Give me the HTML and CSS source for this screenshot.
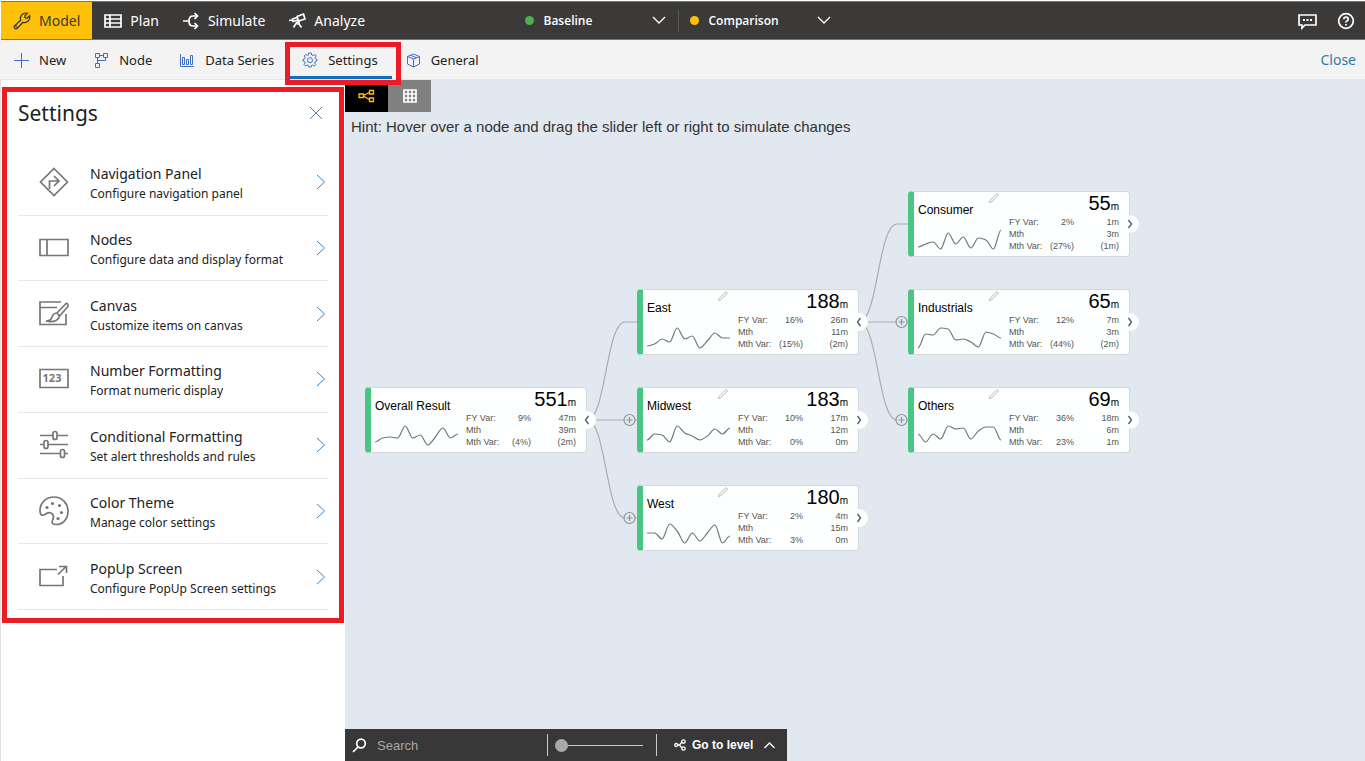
FILE: index.html
```html
<!DOCTYPE html>
<html lang="en">
<head>
<meta charset="utf-8">
<title>Model settings</title>
<meta name="viewport" content="width=device-width, initial-scale=1">
<link rel="stylesheet" href="styles.css">
</head>
<body>
<div class="app">
  <header class="topbar">
    <nav class="modes">
      <button class="mode mode-active" type="button">
        <svg class="icon" width="18" height="18" viewBox="0 0 18 18"><path d="M7.600 8.200C6.300 4 10 .300 14.300 1.400L11.700 4L12.200 5.800L14 6.300L16.600 3.700C17.700 8 14 11.500 9.900 10.300L4.300 16.200A1.700 1.700 0 0 1 1.700 13.700Z"/><circle cx="3.400" cy="14.500" r=".3"/></svg>
        Model
      </button>
      <button class="mode" type="button">
        <svg class="icon bold" width="18" height="18" viewBox="0 0 18 18"><path d="M1 3H17V15H1ZM1 7H17M1 11H17M6 3V15"/></svg>
        Plan
      </button>
      <button class="mode" type="button">
        <svg class="icon bold" width="17" height="18" viewBox="0 0 17 18"><path d="M0 9H6M14 4H10Q6 4 6 9Q6 14 10 14H14M11.500 1L14.500 4L11.500 7M11.500 11L14.500 14L11.500 17"/></svg>
        Simulate
      </button>
      <button class="mode" type="button">
        <svg class="icon bold" width="17" height="18" viewBox="0 0 17 18"><path d="M8 4.500L14.500 2L16 7L9.500 9ZM8 5.500L3.500 7L4 9.500L9 8M3.500 8L0 8.500M8 10L4.500 15.500M8 10H10V12H8M10 12L12.500 15.500"/></svg>
        Analyze
      </button>
    </nav>
    <div class="scenarios">
      <label class="scenario">
        <span class="dot dot-green"></span>
        <select class="scenario-select" aria-label="Baseline scenario"><option>Baseline</option></select>
        <svg class="icon" width="14" height="10" viewBox="0 0 14 10"><path d="M1 1L7 7L13 1"/></svg>
      </label>
      <label class="scenario">
        <span class="dot dot-amber"></span>
        <select class="scenario-select" aria-label="Comparison scenario"><option>Comparison</option></select>
        <svg class="icon" width="14" height="10" viewBox="0 0 14 10"><path d="M1 1L7 7L13 1"/></svg>
      </label>
    </div>
    <div class="utilities">
      <button class="utility" type="button" aria-label="Comments">
        <svg class="icon bold" width="19" height="18" viewBox="0 0 19 18"><path d="M1 3H18V13H7L4 16V13H1Z"/><path class="dots" d="M5 8H7M8.500 8H10.500M12 8H14"/></svg>
      </button>
      <button class="utility" type="button" aria-label="Help">
        <svg class="icon bold" width="18" height="18" viewBox="0 0 18 18"><circle cx="9" cy="9" r="7.300"/><path d="M6.800 7.300Q6.800 5.200 9 5.200T11.200 7.200Q11.200 8.300 10 8.900T9 10.600M9 12V13.500"/></svg>
      </button>
    </div>
  </header>

  <div class="toolbar">
    <button class="tool" type="button">
      <svg class="icon tool-icon" width="15" height="15" viewBox="0 0 15 15"><path d="M0 7.500H15M7.500 0V15"/></svg>
      New
    </button>
    <button class="tool" type="button">
      <svg class="icon tool-icon" width="15" height="15" viewBox="0 0 15 15"><path d="M1.500 .500H5.500V4.500H1.500ZM9.500 .500H13.500V4.500H9.500ZM1.500 10.500H5.500V14.500H1.500ZM3.500 4.500V10.500M5.500 2.500H9.500M11.500 4.500V7.500H3.500"/></svg>
      Node
    </button>
    <button class="tool" type="button">
      <svg class="icon tool-icon" width="15" height="15" viewBox="0 0 15 15"><path d="M.500 1V13.500H14M2.500 4.500H4.500V11.500H2.500ZM6.500 6.500H8.500V11.500H6.500ZM10.500 2.500H12.500V11.500H10.500Z"/></svg>
      Data Series
    </button>
    <button class="tool tool-active" type="button">
      <svg class="icon tool-icon" width="16" height="16" viewBox="0 0 16 16"><path d="M6.700 1H9.300L9.700 3L11.200 3.600L12.900 2.400L14.200 4.100L13 5.800L13.400 7L15 7.500V9L13.200 9.500L12.700 11L13.800 12.600L12.200 14L10.600 13L9.500 13.400L9.200 15H6.800L6.400 13.400L5.200 13L3.600 14L2.100 12.500L3.200 11L2.700 9.500L1 9V7.300L2.700 6.800L3.200 5.500L2.200 3.900L3.700 2.400L5.200 3.500L6.300 3Z"/><circle cx="8" cy="8.200" r="2.500"/></svg>
      Settings
    </button>
    <button class="tool" type="button">
      <svg class="icon tool-icon" width="15" height="15" viewBox="0 0 15 15"><path d="M7.500 1L13.500 3.500V11L7.500 14L1.500 11V3.500ZM1.500 3.500L7.500 6L13.500 3.500M7.500 6V14M4.500 2.300L10.500 4.800"/></svg>
      General
    </button>
    <a class="close-link" href="#">Close</a>
    <span class="callout callout-tab"></span>
  </div>

  <div class="workspace">
    <aside class="panel">
      <div class="panel-head">
        <h1 class="panel-title">Settings</h1>
        <button class="panel-close" type="button" aria-label="Close settings">
          <svg class="icon" width="14" height="14" viewBox="0 0 14 14"><path d="M1 1L13 13M13 1L1 13"/></svg>
        </button>
      </div>
      <div class="options">
        <button class="option" type="button">
          <svg class="icon option-icon" width="30" height="30" viewBox="0 0 30 30"><path d="M15 1.500L28.500 15L15 28.500L1.500 15ZM10.500 22V14H19M15 9L20 14L15 19"/></svg>
          <span class="option-text"><span class="option-title">Navigation Panel</span><span class="option-note">Configure navigation panel</span></span>
          <svg class="icon option-arrow" width="10" height="16" viewBox="0 0 10 16"><path d="M1 1L8.500 8L1 15"/></svg>
        </button>
        <button class="option" type="button">
          <svg class="icon option-icon" width="30" height="30" viewBox="0 0 30 30"><path d="M1 6.500H29V22.500H1ZM8 6.500V22.500"/></svg>
          <span class="option-text"><span class="option-title">Nodes</span><span class="option-note">Configure data and display format</span></span>
          <svg class="icon option-arrow" width="10" height="16" viewBox="0 0 10 16"><path d="M1 1L8.500 8L1 15"/></svg>
        </button>
        <button class="option" type="button">
          <svg class="icon option-icon" width="30" height="30" viewBox="0 0 30 30"><path d="M22 3H1V25.500H27V15M1 8.500H18M27 4.500L18 14L20.500 17L29 7.500Q29 4 27 4.500ZM18 14Q14 14.500 13 18Q12 22 7 22Q13 23.500 17 21.500Q20 20 20.500 17"/></svg>
          <span class="option-text"><span class="option-title">Canvas</span><span class="option-note">Customize items on canvas</span></span>
          <svg class="icon option-arrow" width="10" height="16" viewBox="0 0 10 16"><path d="M1 1L8.500 8L1 15"/></svg>
        </button>
        <button class="option" type="button">
          <svg class="icon option-icon" width="30" height="30" viewBox="0 0 30 30"><path d="M1 5.500H29V23.500H1Z"/><text class="digits" x="13" y="18">123</text></svg>
          <span class="option-text"><span class="option-title">Number Formatting</span><span class="option-note">Format numeric display</span></span>
          <svg class="icon option-arrow" width="10" height="16" viewBox="0 0 10 16"><path d="M1 1L8.500 8L1 15"/></svg>
        </button>
        <button class="option" type="button">
          <svg class="icon option-icon" width="30" height="30" viewBox="0 0 30 30"><path d="M1 5.500H13.500M18.500 5.500H29M1 14.500H4.500M9.500 14.500H29M1 23.500H21M26 23.500H29"/><rect x="14" y="1.500" width="4" height="8" rx="2"/><rect x="5" y="10.500" width="4" height="8" rx="2"/><rect x="21.500" y="19.500" width="4" height="8" rx="2"/></svg>
          <span class="option-text"><span class="option-title">Conditional Formatting</span><span class="option-note">Set alert thresholds and rules</span></span>
          <svg class="icon option-arrow" width="10" height="16" viewBox="0 0 10 16"><path d="M1 1L8.500 8L1 15"/></svg>
        </button>
        <button class="option" type="button">
          <svg class="icon option-icon" width="30" height="30" viewBox="0 0 30 30"><path d="M1 14.500C1 7 7 1 15 1S29 7 29 15.500C29 23 24 28.500 17 28.500Q12 28.500 13.500 24.500Q16 19 12 17Q9 16 6 18.500Q1 21 1 14.500Z"/><g class="dabs"><circle cx="8" cy="11.500" r="1.600"/><circle cx="13.500" cy="7.500" r="1.600"/><circle cx="20.500" cy="9.500" r="1.600"/><circle cx="22.500" cy="16.500" r="1.600"/><circle cx="19" cy="22.500" r="1.600"/></g></svg>
          <span class="option-text"><span class="option-title">Color Theme</span><span class="option-note">Manage color settings</span></span>
          <svg class="icon option-arrow" width="10" height="16" viewBox="0 0 10 16"><path d="M1 1L8.500 8L1 15"/></svg>
        </button>
        <button class="option" type="button">
          <svg class="icon option-icon" width="30" height="30" viewBox="0 0 30 30"><path d="M18 7.500H1V23.500H24V14M19 12.500L27 4.500M20 4.500H27.500V11"/></svg>
          <span class="option-text"><span class="option-title">PopUp Screen</span><span class="option-note">Configure PopUp Screen settings</span></span>
          <svg class="icon option-arrow" width="10" height="16" viewBox="0 0 10 16"><path d="M1 1L8.500 8L1 15"/></svg>
        </button>
      </div>
      <span class="callout callout-panel"></span>
    </aside>

    <main class="stage">
      <div class="views">
        <button class="view view-active" type="button" aria-label="Tree view">
          <svg class="icon" width="17" height="14" viewBox="0 0 17 14"><path d="M1 5H5.500V8.500H1ZM11.500 1.500H15.500V5H11.500ZM11.500 9H15.500V12.500H11.500ZM5.500 6.500L11.500 3.300M5.500 7L11.500 10.800"/></svg>
        </button>
        <button class="view" type="button" aria-label="Grid view">
          <svg class="icon bold" width="14" height="14" viewBox="0 0 14 14"><path d="M1 1H13V13H1ZM1 5H13M1 9H13M5 1V13M9 1V13"/></svg>
        </button>
      </div>
      <p class="hint">Hint: Hover over a node and drag the slider left or right to simulate changes</p>
      <div class="tree" id="tree">
        <svg class="links" width="800" height="480" viewBox="0 0 800 480">
          <path d="M242 340C261 340 261 242 280 242H292M242 340H292M242 340C261 340 261 438 280 438H292"/>
          <path d="M514 242C533 242 533 144 552 144H564M514 242H564M514 242C533 242 533 340 552 340H564"/>
          <g class="adders">
            <path d="M279 340a5.500 5.500 0 1 0 11 0a5.500 5.500 0 1 0 -11 0M281.500 340H287.500M284.500 337V343"/>
            <path d="M279 438a5.500 5.500 0 1 0 11 0a5.500 5.500 0 1 0 -11 0M281.500 438H287.500M284.500 435V441"/>
            <path d="M551 242a5.500 5.500 0 1 0 11 0a5.500 5.500 0 1 0 -11 0M553.500 242H559.500M556.500 239V245"/>
            <path d="M551 340a5.500 5.500 0 1 0 11 0a5.500 5.500 0 1 0 -11 0M553.500 340H559.500M556.500 337V343"/>
          </g>
        </svg>
      </div>
      <div class="bottombar">
        <label class="search">
          <svg class="icon bold" width="15" height="15" viewBox="0 0 15 15"><circle cx="9" cy="5.500" r="4.300"/><path d="M6 9L1 14"/></svg>
          <input class="search-input" type="text" placeholder="Search" aria-label="Search">
        </label>
        <div class="zoom"><input class="zoom-range" type="range" min="0" max="100" value="0" aria-label="Zoom"></div>
        <button class="level" type="button">
          <svg class="icon" width="12" height="12" viewBox="0 0 12 12"><circle cx="2.200" cy="6" r="1.500"/><circle cx="9.500" cy="2.500" r="1.700"/><circle cx="9.500" cy="9.500" r="1.700"/><path d="M3.700 6H5.500L8 3M5.500 6L8 9"/></svg>
          Go to level
          <svg class="icon" width="13" height="9" viewBox="0 0 13 9"><path d="M1.500 7L6.500 2L11.500 7"/></svg>
        </button>
      </div>
    </main>
  </div>
</div>
<script src="script.js"></script>
</body>
</html>
```
FILE: styles.css
```css
* { box-sizing: border-box; }
body {
  margin: 0;
  background: #fff;
  color: #222;
  font-family: "Noto Sans", "Open Sans", sans-serif;
}
button {
  border: 0;
  padding: 0;
  background: none;
  color: inherit;
  font: inherit;
  text-align: left;
}
.icon {
  flex: none;
  fill: none;
  stroke: currentColor;
  stroke-width: 1.3;
}
.icon.bold { stroke-width: 1.7; }
.app {
  display: flex;
  flex-direction: column;
  height: 100vh;
  padding-top: 1px;
  overflow: hidden;
}

/* Top bar */
.topbar {
  display: grid;
  grid-template-columns: 1fr auto 1fr;
  flex: none;
  height: 39px;
  margin-left: 1px;
  border-top: 1px solid #777;
  border-bottom: 1px solid #777;
  background: #3b3a38;
  color: #fff;
}
.modes { display: flex; font-size: 14px; }
.mode {
  display: flex;
  align-items: center;
  gap: 8px;
  padding: 0 12px;
}
.mode-active { background: #ffc00a; color: #3b3a38; }
.scenarios { display: flex; align-items: center; padding-right: 10px; }
.scenario {
  display: flex;
  align-items: center;
  gap: 10px;
  height: 22px;
  padding: 0 12px 0 11px;
}
.scenario + .scenario { border-left: 1px solid #5a5a58; }
.dot { width: 9px; height: 9px; border-radius: 50%; }
.dot-green { background: #4caf50; }
.dot-amber { background: #ffc00a; }
.scenario-select {
  width: 98px;
  padding: 0;
  border: 0;
  appearance: none;
  background: none;
  color: #fff;
  font: 600 12px "Open Sans", sans-serif;
}
.utilities {
  display: flex;
  justify-content: flex-end;
  align-items: center;
  gap: 20px;
  padding-right: 10px;
}
.utility { display: flex; }
.dots { stroke-width: 2; }

/* Toolbar */
.toolbar {
  position: relative;
  display: flex;
  flex: none;
  height: 40px;
  border-bottom: 1px solid #e6e6e6;
  background: #f3f3f3;
  font-size: 13px;
}
.tool {
  display: flex;
  align-items: center;
  gap: 10px;
  padding: 4px 14px 0;
  border-bottom: 3px solid transparent;
}
.tool-active { border-bottom-color: #106ebe; }
.tool-icon { color: #3f6fc4; stroke-width: 1; }
.close-link {
  align-self: center;
  margin-left: auto;
  padding-right: 9px;
  color: #2f7da6;
  font-size: 14px;
  text-decoration: none;
}
.callout {
  position: absolute;
  z-index: 2;
  border: 5px solid #ed1c24;
  pointer-events: none;
}
.callout-tab { left: 285px; top: 2px; width: 116px; height: 43px; }
.callout-panel { inset: 7px 1px auto 1px; height: 536px; }

/* Settings panel */
.workspace { display: flex; flex: 1; min-height: 0; }
.panel {
  position: relative;
  flex: none;
  width: 345px;
  padding: 15px 17px 0;
  border-left: 1px solid #e1e1e1;
}
.panel-head {
  display: flex;
  justify-content: space-between;
  align-items: center;
  padding-right: 5px;
}
.panel-title {
  margin: 0;
  font-size: 21px;
  font-weight: 400;
  line-height: 36px;
}
.panel-close { display: flex; color: #5f7fa8; }
.panel-close .icon { stroke-width: 1; }
.options {
  display: grid;
  grid-auto-rows: 1fr;
  min-height: 460px;
  margin-top: 19px;
}
.option {
  display: flex;
  align-items: center;
  padding: 0 2px 0 21px;
  border-bottom: 1px solid #e9e9e9;
}
.option-icon { color: #767676; stroke-width: 1.700; }
.digits {
  fill: #767676;
  stroke: none;
  font: 700 11px "Open Sans", sans-serif;
  text-anchor: middle;
}
.dabs { fill: #767676; stroke: none; }
.option-text { flex: 1; padding: 3px 0 0 21px; }
.option-title, .option-note { display: block; }
.option-title { font-size: 14px; line-height: 21px; }
.option-note { font-size: 12px; line-height: 20px; }
.option-arrow { color: #2b88d8; stroke-width: 1; }

/* Canvas */
.stage {
  position: relative;
  display: flex;
  flex: 1;
  flex-direction: column;
  min-width: 0;
  background: #e1e8f0;
  font-family: "Liberation Sans", Arial, sans-serif;
}
.views { display: flex; }
.view {
  display: flex;
  justify-content: center;
  align-items: center;
  width: 43px;
  height: 32px;
  background: #808080;
  color: #fff;
}
.view-active { background: #000; color: #ffc00a; }
.hint {
  margin: 0;
  padding: 5px 6px;
  color: #333;
  font-size: 15px;
  line-height: 20px;
}
.tree { position: absolute; inset: 0; }
.views, .hint, .bottombar { position: relative; z-index: 1; }
.links { display: block; fill: none; stroke: #a9adb3; stroke-width: 1.2; }
.adders { fill: #e1e8f0; stroke: #8f9297; }
.node {
  position: absolute;
  display: grid;
  grid-template-columns: 91px 1fr;
  width: 222px;
  height: 66px;
  padding: 0 10px 0 4px;
  border: 1px solid #d3d8df;
  border-left: 6px solid #4bc582;
  border-radius: 4px;
  background: #fdfffe;
}
.node-name { padding-top: 10px; color: #000; font-size: 12px; line-height: 16px; }
.spark { display: block; margin-top: 9px; fill: none; stroke: #777; stroke-width: 1.2; }
.node-value {
  padding-top: 2px;
  color: #000;
  font-size: 20px;
  line-height: 19px;
  text-align: right;
}
.unit { font-size: 10px; }
.stats {
  width: 100%;
  table-layout: fixed;
  border-collapse: collapse;
  color: #555;
  font-size: 9px;
  line-height: 12px;
}
.stats th, .stats td { padding: 0; font-weight: 400; text-align: right; white-space: nowrap; }
.stats th { width: 36px; text-align: left; }
.stats td:nth-child(2) { width: 29px; }
.node-edit { position: absolute; left: 74px; top: 0; display: flex; color: #b5b5b5; }
.node-edit .icon { stroke-width: 1; }
.node-toggle {
  position: absolute;
  right: -10px;
  top: 23px;
  display: flex;
  justify-content: center;
  align-items: center;
  width: 18px;
  height: 18px;
  border-radius: 50%;
  background: #fdfffe;
  color: #555;
}

/* Bottom bar */
.bottombar {
  display: flex;
  align-items: center;
  align-self: flex-start;
  height: 32px;
  margin-top: auto;
  padding: 0 11px 0 7px;
  background: #373837;
  color: #fff;
}
.search { display: flex; align-items: center; gap: 10px; }
.search-input {
  width: 170px;
  padding: 0;
  border: 0;
  outline: 0;
  background: none;
  color: #fff;
  font: 13px "Liberation Sans", Arial, sans-serif;
}
.search-input::placeholder { color: #a8a8a8; opacity: 1; }
.zoom {
  display: flex;
  align-items: center;
  height: 22px;
  padding: 0 13px 0 7px;
  border-left: 1px solid #c8c8c8;
  border-right: 1px solid #c8c8c8;
}
.zoom-range {
  width: 88px;
  height: 13px;
  margin: 0;
  appearance: none;
  background: linear-gradient(#c8c8c8, #c8c8c8) center / 100% 1px no-repeat;
}
.zoom-range::-webkit-slider-thumb {
  width: 13px;
  height: 13px;
  appearance: none;
  border-radius: 50%;
  background: #aaa;
}
.level {
  display: flex;
  align-items: center;
  gap: 6px;
  padding-left: 17px;
  font-size: 12px;
  font-weight: 700;
}
.level .icon:last-child { margin-left: 4px; }
```
FILE: script.js
```js
const nodes = [
  { name: 'Overall Result', x: 20, y: 307, value: 551, open: true,
    stats: [['FY Var:', '9%', '47m'], ['Mth', '', '39m'], ['Mth Var:', '(4%)', '(2m)']],
    trend: [19, 15, 14, 15, 3, 15, 12, 22, 14, 5, 15, 11] },
  { name: 'East', x: 292, y: 209, value: 188, open: true, edit: true,
    stats: [['FY Var:', '16%', '26m'], ['Mth', '', '11m'], ['Mth Var:', '(15%)', '(2m)']],
    trend: [21, 19, 14, 17, 3, 14, 11, 23, 16, 8, 13, 13] },
  { name: 'Midwest', x: 292, y: 307, value: 183, edit: true,
    stats: [['FY Var:', '10%', '17m'], ['Mth', '', '12m'], ['Mth Var:', '0%', '0m']],
    trend: [17, 11, 12, 19, 3, 10, 13, 17, 13, 6, 11, 5] },
  { name: 'West', x: 292, y: 405, value: 180, edit: true,
    stats: [['FY Var:', '2%', '4m'], ['Mth', '', '15m'], ['Mth Var:', '3%', '0m']],
    trend: [12, 12, 18, 3, 10, 22, 12, 20, 12, 4, 22, 15] },
  { name: 'Consumer', x: 563, y: 111, value: 55, edit: true,
    stats: [['FY Var:', '2%', '1m'], ['Mth', '', '3m'], ['Mth Var:', '(27%)', '(1m)']],
    trend: [20, 17, 15, 22, 6, 17, 10, 21, 11, 13, 22, 3] },
  { name: 'Industrials', x: 563, y: 209, value: 65, edit: true,
    stats: [['FY Var:', '12%', '7m'], ['Mth', '', '3m'], ['Mth Var:', '(44%)', '(2m)']],
    trend: [23, 9, 10, 3, 4, 15, 14, 17, 22, 7, 9, 13] },
  { name: 'Others', x: 563, y: 307, value: 69, edit: true,
    stats: [['FY Var:', '36%', '18m'], ['Mth', '', '6m'], ['Mth Var:', '23%', '1m']],
    trend: [11, 19, 11, 16, 3, 6, 5, 16, 8, 4, 4, 17] }
];

// Smooth curve through evenly spaced values, flat at each local peak.
function sparkline(values) {
  const step = 83 / (values.length - 1);
  const slope = values.map((v, i) => {
    const a = v - values[i - 1];
    const b = values[i + 1] - v;
    return a * b > 0 ? (2 * a * b) / (a + b) : 0;
  });
  let d = `M0 ${values[0]}`;
  for (let i = 1; i < values.length; i++) {
    const x0 = (i - 1) * step;
    const x1 = i * step;
    d += `C${x0 + step / 3} ${values[i - 1] + slope[i - 1] / 3} ${x1 - step / 3} ${values[i] - slope[i] / 3} ${x1} ${values[i]}`;
  }
  return d;
}

const pencil = `<button class="node-edit" type="button" aria-label="Edit">
  <svg class="icon" width="12" height="12" viewBox="0 0 12 12"><path d="M1.500 10.500L2 8.500L9 1.500L10.500 3L3.500 10Z"/></svg></button>`;

const tree = document.getElementById('tree');
for (const node of nodes) {
  const card = document.createElement('article');
  card.className = 'node';
  card.style.left = node.x + 'px';
  card.style.top = node.y + 'px';
  card.innerHTML = `
    <div>
      <div class="node-name">${node.name}</div>
      <svg class="spark" width="84" height="26" viewBox="0 0 84 26"><path d="${sparkline(node.trend)}"/></svg>
    </div>
    <div>
      <div class="node-value">${node.value}<span class="unit">m</span></div>
      <table class="stats">${node.stats.map(([label, pct, amount]) =>
        `<tr><th scope="row">${label}</th><td>${pct}</td><td>${amount}</td></tr>`).join('')}</table>
    </div>
    ${node.edit ? pencil : ''}
    <button class="node-toggle" type="button" aria-label="Toggle children">
      <svg class="icon" width="6" height="10" viewBox="0 0 6 10"><path d="${node.open ? 'M4.500 1L1.500 5L4.500 9' : 'M1.500 1L4.500 5L1.500 9'}"/></svg>
    </button>`;
  tree.append(card);
}
```
